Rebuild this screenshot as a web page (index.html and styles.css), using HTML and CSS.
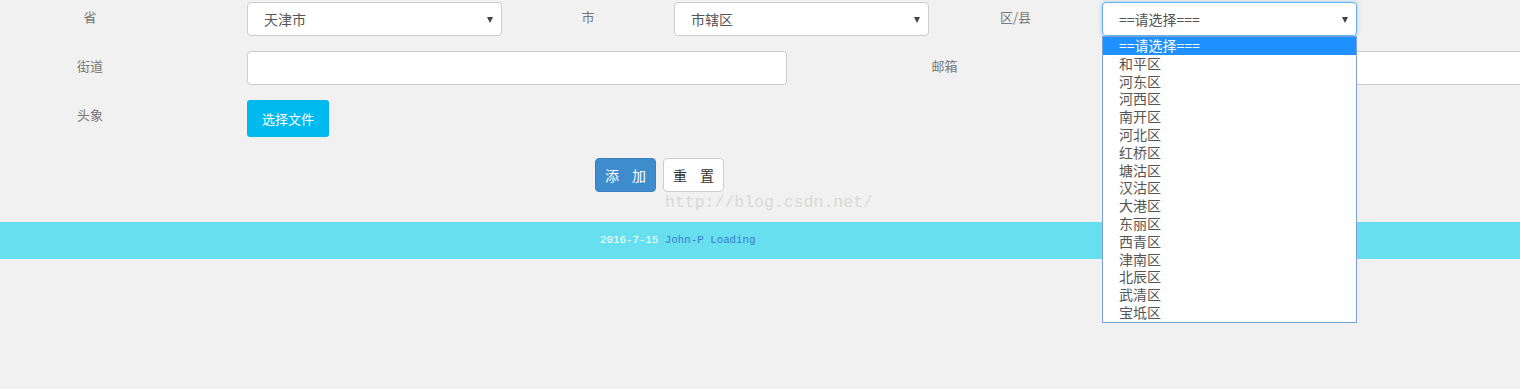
FILE: index.html
```html
<!DOCTYPE html>
<html>
<head>
	<meta charset="UTF-8">
	<title>添加用户</title>
	<link rel="stylesheet" href="styles.css">
</head>
<body>
	<div class="form">
		<div class="row">
			<label class="cell first">省</label>
			<div class="select">天津市<span class="caret"></span></div>
			<label class="cell city">市</label>
			<div class="select">市辖区<span class="caret"></span></div>
			<label class="cell county">区/县</label>
			<div class="select focus">==请选择===<span class="caret"></span>
				<ul class="options">
					<li class="active">==请选择===</li>
					<li>和平区</li>
					<li>河东区</li>
					<li>河西区</li>
					<li>南开区</li>
					<li>河北区</li>
					<li>红桥区</li>
					<li>塘沽区</li>
					<li>汉沽区</li>
					<li>大港区</li>
					<li>东丽区</li>
					<li>西青区</li>
					<li>津南区</li>
					<li>北辰区</li>
					<li>武清区</li>
					<li>宝坻区</li>
				</ul>
			</div>
		</div>
		<div class="row">
			<label class="cell first">街道</label>
			<input type="text" class="text wide">
			<label class="cell email">邮箱</label>
			<input type="text" class="text cut">
		</div>
		<div class="row">
			<label class="cell first">头象</label>
			<button class="file-btn">选择文件</button>
		</div>
	</div>

	<div class="actions">
		<button class="btn primary">添 加</button>
		<button class="btn">重 置</button>
		<span class="watermark">http://blog.csdn.net/</span>
	</div>

	<div class="footer">
		<span class="date">2016-7-15</span> <a href="#">John-P Loading</a>
	</div>
</body>
</html>
```

FILE: styles.css
```css
body {
	margin: 0;
	min-height: 389px;
	background-color: #f1f1f1;
	font-family: "Noto Sans CJK SC", "Liberation Sans", sans-serif;
	font-size: 14px;
	color: #555;
}

.form {
	padding-top: 2px;
}

.row {
	display: flex;
	align-items: flex-start;
	margin-bottom: 15px;
	white-space: nowrap;
}

.cell {
	flex: none;
	box-sizing: border-box;
	text-align: center;
	color: #777;
	font-size: 13px;
	line-height: 20px;
	padding-top: 5px;
}

.cell.first {
	width: 180px;
	margin-right: 67px;
}

.cell.city {
	width: 172px;
}

.cell.county {
	width: 173px;
}

.cell.email {
	width: 315px;
}

.select {
	position: relative;
	flex: none;
	box-sizing: border-box;
	width: 255px;
	height: 34px;
	padding: 0 16px;
	line-height: 32px;
	background-color: white;
	border: 1px solid #ccc;
	border-radius: 4px;
}

.select.focus {
	border-color: #66afe9;
	box-shadow: 0 0 4px rgba(102, 175, 233, 0.6);
}

.caret {
	position: absolute;
	right: 8px;
	top: 14px;
	border-left: 3px solid transparent;
	border-right: 3px solid transparent;
	border-top: 6px solid #444;
}

.options {
	position: absolute;
	top: 33px;
	left: -1px;
	width: 255px;
	box-sizing: border-box;
	margin: 0;
	padding: 0;
	list-style-type: none;
	background-color: white;
	border: 1px solid #7b9fd8;
	z-index: 5;
}

.options li {
	height: 17.8px;
	line-height: 17.8px;
	padding-left: 16px;
	color: #555;
}

.options li.active {
	background-color: #1e90ff;
	color: white;
}

.text {
	flex: none;
	box-sizing: border-box;
	height: 34px;
	background-color: white;
	border: 1px solid #ccc;
	border-radius: 4px;
}

.text.wide {
	width: 540px;
}

.text.cut {
	width: 418px;
	border-right: none;
	border-radius: 4px 0 0 4px;
}

.file-btn {
	flex: none;
	width: 82px;
	height: 37px;
	padding: 0;
	font-family: inherit;
	font-size: 13px;
	color: white;
	background-color: #00b9ef;
	border: none;
	border-radius: 3px;
}

.actions {
	position: relative;
	display: flex;
	gap: 7px;
	padding-left: 595px;
	margin-top: 21px;
	height: 34px;
}

.btn {
	width: 61px;
	height: 34px;
	padding: 0;
	font-family: inherit;
	font-size: 14px;
	letter-spacing: 5px;
	text-indent: 5px;
	color: #333;
	background-color: white;
	border: 1px solid #ccc;
	border-radius: 4px;
}

.btn.primary {
	color: white;
	background-color: #3f8ccd;
	border-color: #3a82c2;
}

.watermark {
	position: absolute;
	left: 665px;
	top: 35px;
	font-family: "Liberation Mono", monospace;
	font-size: 16.5px;
	color: #d9d9d9;
	white-space: nowrap;
}

.footer {
	margin-top: 30px;
	height: 37px;
	line-height: 37px;
	padding-left: 600px;
	background-color: #67dfee;
	font-family: "Liberation Mono", monospace;
	font-size: 10.8px;
}

.footer .date {
	color: white;
}

.footer a {
	color: #3c7ccf;
	text-decoration: none;
}
```
